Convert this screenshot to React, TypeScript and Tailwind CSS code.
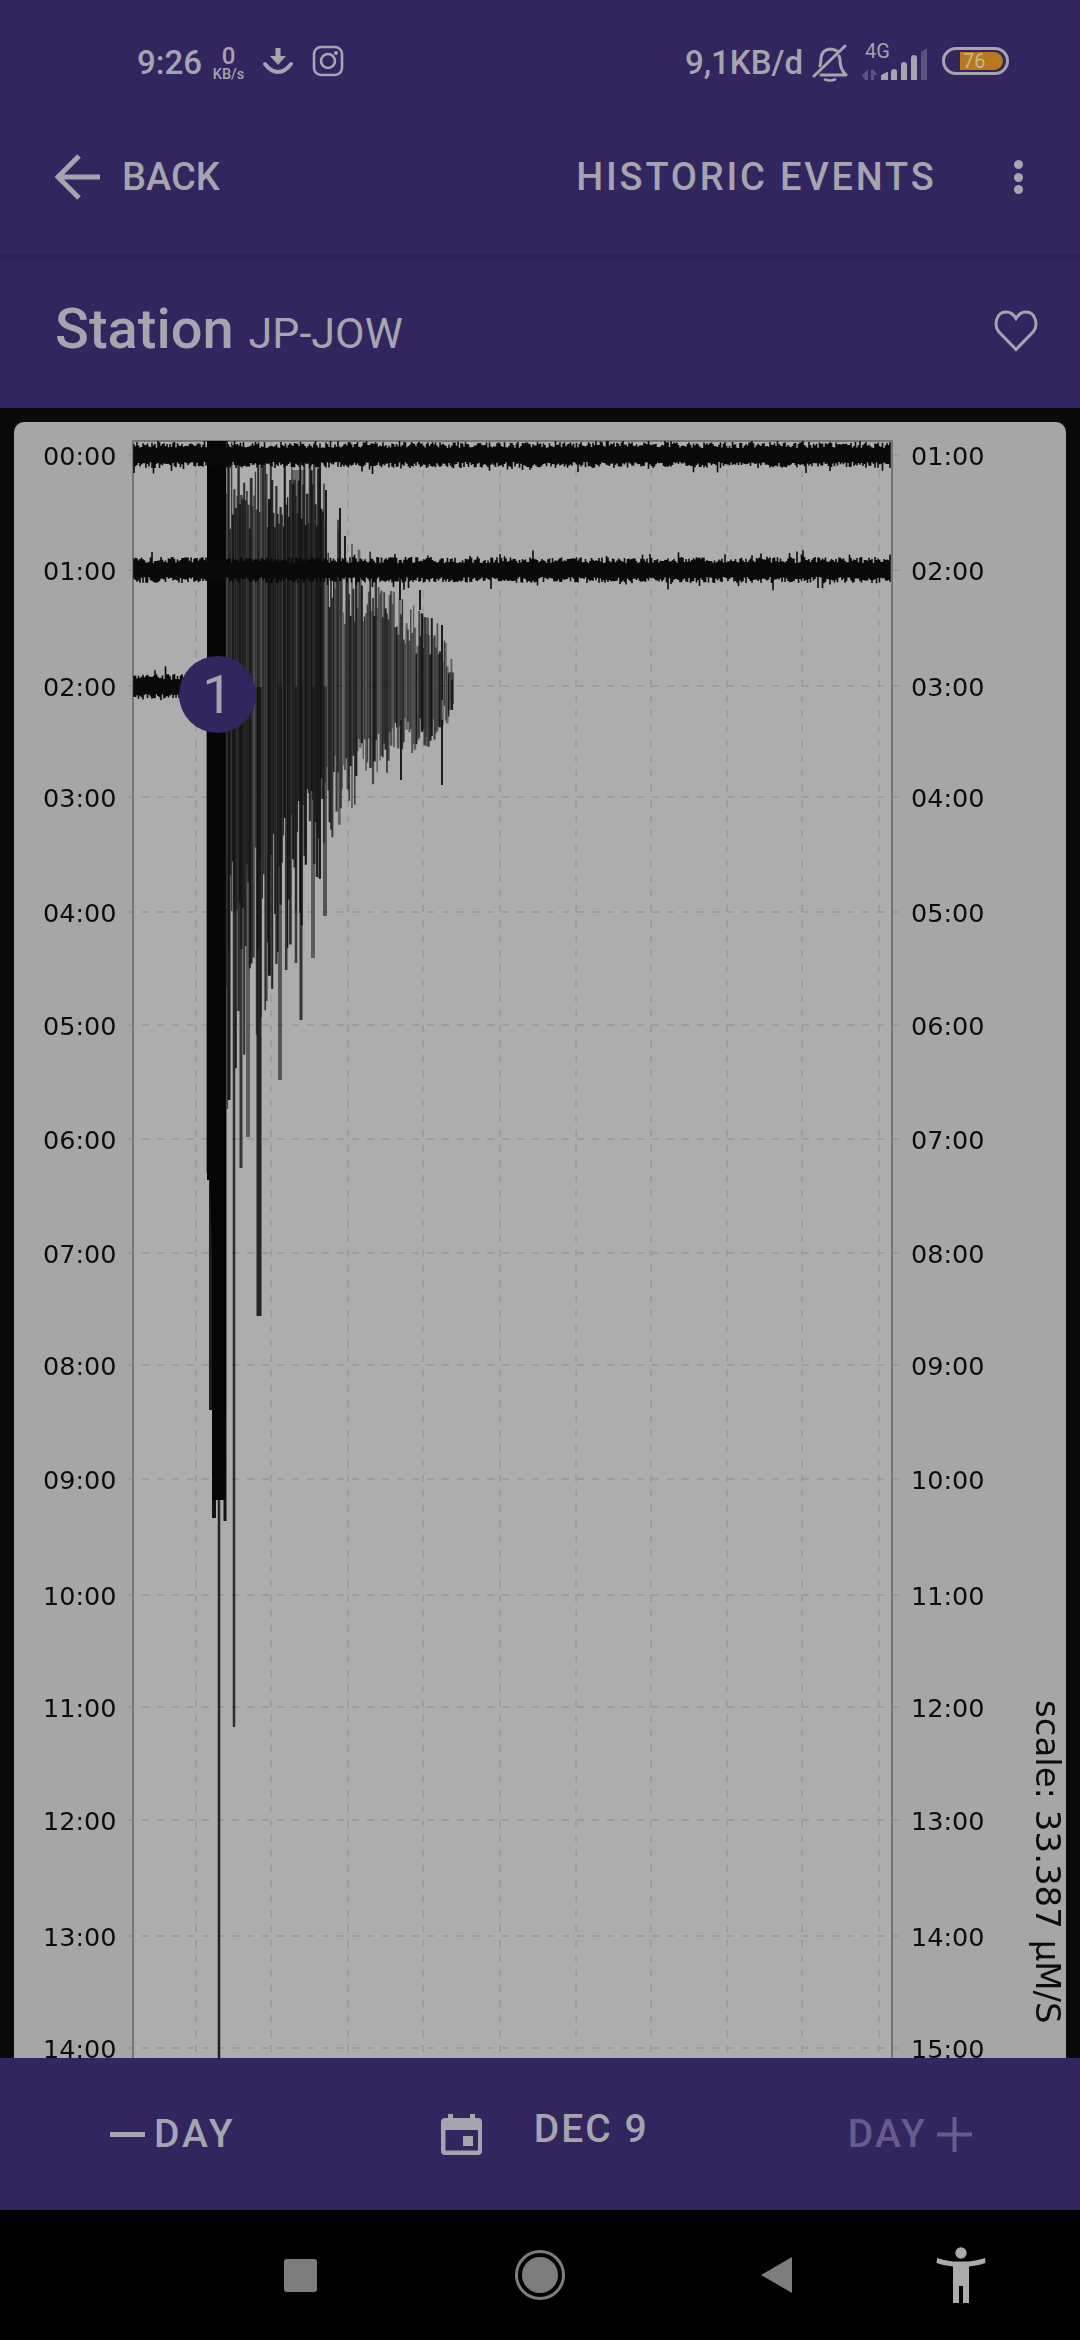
const FONT_ROBOTO = "font-['Roboto',sans-serif]";

// small seeded generator so the trace looks the same on every render
const makeRandom = (seed: number) => () => {
  seed = (seed + 0x6d2b79f5) | 0;
  let t = Math.imul(seed ^ (seed >>> 15), 1 | seed);
  t = (t + Math.imul(t ^ (t >>> 7), 61 | t)) ^ t;
  return ((t ^ (t >>> 14)) >>> 0) / 4294967296;
};

const lerp = (points: number[][], x: number) => {
  for (let i = 1; i < points.length; i++) {
    if (x <= points[i][0]) {
      const [x0, y0] = points[i - 1];
      const [x1, y1] = points[i];
      return y0 + ((y1 - y0) * (x - x0)) / (x1 - x0);
    }
  }
  return points[points.length - 1][1];
};

const noiseTrace = (seed: number, y: number, from: number, to: number) => {
  const rand = makeRandom(seed);
  let d = "";
  for (let x = from; x < to; x += 1.5) {
    const up = 7 + rand() * 6 + (rand() > 0.92 ? rand() * 8 : 0);
    const down = 7 + rand() * 6 + (rand() > 0.92 ? rand() * 8 : 0);
    d += `M${x} ${Math.max(441, y - up).toFixed(1)}V${(y + down).toFixed(1)}`;
  }
  return d;
};

const HOUR_Y = [455, 570, 686, 797, 912, 1025, 1139, 1253, 1365, 1479, 1595, 1707, 1820, 1936, 2048];
const GRID_X = [196, 271, 348, 423, 500, 576, 651, 727, 802, 879];

const UPPER = [[207, 440], [322, 440], [327, 490], [340, 508], [350, 535], [385, 560], [400, 590], [420, 610], [442, 625], [452, 660]];
const LOWER = [[226, 1130], [240, 1110], [262, 1030], [280, 990], [300, 930], [325, 870], [345, 820], [370, 790], [400, 760], [440, 745], [452, 715]];

// coda of the event: a dense dark mass with sparser, longer strokes on top
const quakeBars = () => {
  const rand = makeRandom(77);
  const bars: { d: string; o: number; w: number }[] = [];
  for (let x = 226; x < 453; x += 1.4) {
    const top = lerp(UPPER, x);
    const bottom = lerp(LOWER, x);
    const reach = x < 322 ? 0.62 + rand() * 0.38 : rand() > 0.7 ? 0.75 + rand() * 0.25 : 0.35 + rand() * 0.4;
    const reachDown = rand() > 0.7 ? 0.8 + rand() * 0.2 : 0.4 + rand() * 0.4;
    const o = x < 320 ? 0.65 + rand() * 0.35 : 0.45 + rand() * 0.5;
    bars.push({
      d: `M${x.toFixed(1)} ${(687 - (687 - top) * reach).toFixed(1)}V${(687 + (bottom - 687) * reachDown).toFixed(1)}`,
      o,
      w: 1.2 + rand() * 1.6,
    });
  }
  return bars;
};

// the long strokes that stick out below the main burst
const LONG_BARS = [
  { x: 208, w: 3, to: 1173, o: 0.8 },
  { x: 211, w: 4, to: 1410, o: 0.9 },
  { x: 214, w: 4, to: 1518, o: 0.95 },
  { x: 219, w: 2.5, to: 2060, o: 0.85 },
  { x: 225, w: 3, to: 1521, o: 0.95 },
  { x: 229, w: 3, to: 1100, o: 0.9 },
  { x: 234, w: 2.5, to: 1727, o: 0.8 },
  { x: 241, w: 3, to: 1168, o: 0.75 },
  { x: 248, w: 4, to: 1137, o: 0.5 },
  { x: 259, w: 5, to: 1316, o: 0.85 },
  { x: 280, w: 4, to: 1080, o: 0.55 },
  { x: 296, w: 2.5, to: 963, o: 0.7 },
  { x: 301, w: 3, to: 1020, o: 0.75 },
  { x: 313, w: 4, to: 958, o: 0.5 },
  { x: 325, w: 4, to: 916, o: 0.55 },
];

const SeismoPlot = () => (
  <svg
    viewBox="14 422 1052 1636"
    className="block h-full w-full blur-[0.7px]"
    fontFamily="'DejaVu Sans',sans-serif"
    fontSize="25.5"
    fill="#0c0c0c"
  >
    <rect x="133" y="440" width="759" height="1640" fill="#adadad" />
    {HOUR_Y.map((y) => (
      <path key={y} d={`M127 ${y}H899`} stroke="#969696" strokeWidth="1.3" strokeDasharray="7 8" />
    ))}
    {GRID_X.map((x) => (
      <path key={x} d={`M${x} 440V2060`} stroke="#969696" strokeWidth="1.3" strokeDasharray="7 8" />
    ))}
    <path d="M133 2060V441H892V2060" fill="none" stroke="#757575" strokeWidth="2" />

    {LONG_BARS.map((bar) => (
      <path key={bar.x} d={`M${bar.x} 687V${bar.to}`} stroke="#0c0c0c" strokeOpacity={bar.o} strokeWidth={bar.w} />
    ))}
    <path d="M207 441H226V1240V1400L225 1500H212V1250L210 1180H207Z" fill="#050505" />
    <path d="M292 470H305V570H292Z" fill="#6a6a6a" />
    {quakeBars().map((bar, i) => (
      <path key={i} d={bar.d} stroke="#141414" strokeOpacity={bar.o} strokeWidth={bar.w} />
    ))}
    <path d="M326 490V560M340 508V570M345 536V570M400 560V600M420 590V610M442 625V700M442 720V785M401 720V780M452 680V710" stroke="#1c1c1c" strokeWidth="2" />

    <path d={noiseTrace(1, 455, 134, 891)} stroke="#0a0a0a" strokeWidth="1.6" />
    <path d={noiseTrace(2, 570, 134, 891)} stroke="#0a0a0a" strokeWidth="1.6" />
    <path d={noiseTrace(3, 687, 134, 207)} stroke="#0a0a0a" strokeWidth="1.6" />

    {HOUR_Y.map((y, i) => {
      const hour = `${String(i).padStart(2, "0")}:00`;
      const next = `${String(i + 1).padStart(2, "0")}:00`;
      return (
        <g key={hour}>
          <text x="43" y={y + 10}>{hour}</text>
          <text x="911" y={y + 10}>{next}</text>
        </g>
      );
    })}
    <text transform="translate(1036 1700) rotate(90)" fontSize="34">scale: 33.387 µM/S</text>
  </svg>
);

const BellMuted = () => (
  <svg width="36" height="38" viewBox="0 0 36 38" fill="none" stroke="#a6a4ae" strokeWidth="3" strokeLinecap="round" strokeLinejoin="round">
    <path d="M33 2 2 32" />
    <path d="M8 22q1-4 1-8 1-8 9-9 4 0 7 2M27 12q1 2 1 4 0 9 6 15H9" />
    <path d="M13 35.500q5 2 10 0" strokeWidth="2.500" />
  </svg>
);

const SignalIcon = () => (
  <span className="relative ml-[14px] h-[36px] w-[66px]">
    <span className="absolute top-[-4px] left-[3px] text-[20px] leading-[20px]">4G</span>
    <svg className="absolute top-[-7px] left-0" width="68" height="44" viewBox="0 0 68 44" fill="#a6a4ae">
      <path d="M0 37l6-5v10H3zM9 32h2.500l4 5H12v5H9z" fill="#5d5282" />
      <path d="M19 37l6-3h1v8h-7zM29 34q0-3 3-3t3 3v8h-6zM39 27q0-3 3-3t3 3v15h-6zM49 20q0-3 3-3t3 3v22h-6z" />
      <path d="M59 14l6-4v32h-6z" fill="#5d5282" />
    </svg>
  </span>
);

const StatusBar = () => (
  <div className={`flex h-[84px] items-start justify-between pt-[43px] pr-[71px] pl-[137px] text-[#a6a4ae] ${FONT_ROBOTO}`}>
    <div className="flex items-center">
      <span className="text-[33px] leading-[40px] font-medium">9:26</span>
      <span className="ml-[10px] flex w-[33px] flex-col items-center">
        <span className="text-[24px] leading-[24px] font-medium">0</span>
        <span className="text-[14.500px] leading-[14px] font-medium">KB/s</span>
      </span>
      <svg className="ml-[18px]" width="30" height="30" viewBox="0 0 30 30" fill="#a6a4ae">
        <path d="M12.500 0h5v8h5.500L15 17 7 8h5.500z" />
        <path d="M2 16q6 8 13 8t13-8" fill="none" stroke="#a6a4ae" strokeWidth="3.800" strokeLinecap="round" />
      </svg>
      <svg className="mt-[-4px] ml-[19px]" width="32" height="32" viewBox="0 0 32 32" fill="none" stroke="#a6a4ae" strokeWidth="2.600">
        <rect x="2" y="2" width="28" height="28" rx="7" />
        <circle cx="16" cy="16" r="7" />
        <circle cx="24" cy="8" r="2" fill="#a6a4ae" stroke="none" />
      </svg>
    </div>
    <div className="flex items-center">
      <span className="text-[33px] leading-[40px] font-medium">9,1KB/d</span>
      <span className="ml-[9px]"><BellMuted /></span>
      <SignalIcon />
      <span className="relative mt-[-5px] ml-[14px] flex h-[28px] w-[67px] items-center rounded-full border-[3px] border-[#a6a4ae]">
        <span className="ml-[15px] h-[18px] w-[43px] rounded-r-full bg-[#b8791c] pl-[3px] text-[20px] leading-[18px] text-[#c6b793]">76</span>
      </span>
    </div>
  </div>
);

const AppBar = () => (
  <div className={`flex h-[170px] items-start justify-between pt-[70px] pr-[57.500px] pl-[55px] text-[#a6a4ae] ${FONT_ROBOTO}`}>
    <div className="flex items-center gap-[21px]">
      <svg width="46" height="46" viewBox="0 0 46 46" fill="none" stroke="#a6a4ae" strokeWidth="5">
        <path d="M45 23H4M24 2 3 23l21 21" />
      </svg>
      <span className="text-[38px] leading-[46px] font-medium">BACK</span>
    </div>
    <div className="flex items-center">
      <span className="text-[38px] leading-[46px] font-medium tracking-[2.800px]">HISTORIC EVENTS</span>
      <span className="ml-[77px] flex flex-col gap-[3.500px]">
        <span className="size-[9px] rounded-full bg-[#a6a4ae]" />
        <span className="size-[9px] rounded-full bg-[#a6a4ae]" />
        <span className="size-[9px] rounded-full bg-[#a6a4ae]" />
      </span>
    </div>
  </div>
);

const StationBar = () => (
  <div className={`flex h-[154px] items-center justify-between bg-gradient-to-b from-[#2c2154] from-0% to-[#33265f] to-[8%] pr-[42px] pl-[55px] text-[#a6a4ae] ${FONT_ROBOTO}`}>
    <div className="flex items-baseline gap-[15px]">
      <span className="text-[56px] leading-[60px] font-medium">Station</span>
      <span className="text-[43px] leading-[60px]">JP-JOW</span>
    </div>
    <svg width="44" height="42" viewBox="0 0 44 42" fill="none" stroke="#a6a4ae" strokeWidth="3">
      <path d="M22 39.500 5 22C-.500 15.500 2 2 12 2c5 0 8 3 10 6.500C24 5 27 2 32 2c10 0 12.500 13.500 7 20z" />
    </svg>
  </div>
);

const BottomBar = () => (
  <div className={`flex h-[152px] items-center justify-between bg-[#33265f] pr-[108px] pl-[110px] text-[#a6a4ae] ${FONT_ROBOTO}`}>
    <div className="flex items-center gap-[9px]">
      <span className="h-[5px] w-[35px] bg-[#a6a4ae]" />
      <span className="text-[39px] leading-[46px] font-medium tracking-[3px]">DAY</span>
    </div>
    <div className="mr-[-6px] flex items-center gap-[52px]">
      <svg width="41" height="41" viewBox="0 0 41 41" fill="#a6a4ae">
        <path
          fillRule="evenodd"
          d="M7 0h5v4h17V0h5v4h3q4 0 4 4v29q0 4-4 4H4q-4 0-4-4V8q0-4 4-4h3zM4.500 16v20.500H37V16z"
        />
        <rect x="22" y="22" width="10" height="10" />
      </svg>
      <span className="mt-[-10px] text-[39px] leading-[46px] font-medium tracking-[2px]">DEC 9</span>
    </div>
    <div className="flex items-center gap-[10px] text-[#685c8c]">
      <span className="text-[39px] leading-[46px] font-medium tracking-[2.200px]">DAY</span>
      <svg width="35" height="35" viewBox="0 0 35 35" fill="#685c8c">
        <path d="M15.500 0h4v15.500H35v4H19.500V35h-4V19.500H0v-4h15.500z" />
      </svg>
    </div>
  </div>
);

const NavBar = () => (
  <div className="flex h-[130px] items-center bg-black">
    <span className="ml-[284px] size-[33px] rounded-[3px] bg-[#7d7d7d]" />
    <svg className="ml-[198px]" width="50" height="50" viewBox="0 0 50 50">
      <circle cx="25" cy="25" r="23.500" fill="none" stroke="#7d7d7d" strokeWidth="3" />
      <circle cx="25" cy="25" r="18" fill="#7d7d7d" />
    </svg>
    <svg className="ml-[196px]" width="32" height="36" viewBox="0 0 32 36" fill="#7d7d7d">
      <path d="M31 0v36L0 18z" />
    </svg>
    <svg className="ml-[143px]" width="50" height="57" viewBox="0 0 50 57" fill="#ababab">
      <circle cx="25" cy="6" r="5.700" />
      <path d="M1 11Q10 14 17 14.500H33Q40 14 49 11L49.500 16Q42 19 33 19.500V56H27V39H23V56H17V19.500Q8 19 .5 16Z" />
    </svg>
  </div>
);

export default function App() {
  return (
    <div className="flex h-[2340px] w-[1080px] flex-col overflow-hidden bg-[#0a0a0a]">
      <div className="shrink-0 bg-[#33265f]">
        <StatusBar />
        <AppBar />
        <StationBar />
      </div>
      <div className="relative min-h-0 flex-1 px-[14px] pt-[14px]">
        <div className="h-full overflow-hidden rounded-t-[10px] bg-[#a6a6a6]">
          <SeismoPlot />
        </div>
        <span className={`absolute top-[248px] left-[179px] flex size-[77px] items-center justify-center rounded-full bg-[#33265f] text-[54px] text-[#a6a4ae] ${FONT_ROBOTO}`}>
          1
        </span>
      </div>
      <div className="shrink-0">
        <BottomBar />
        <NavBar />
      </div>
    </div>
  );
}
